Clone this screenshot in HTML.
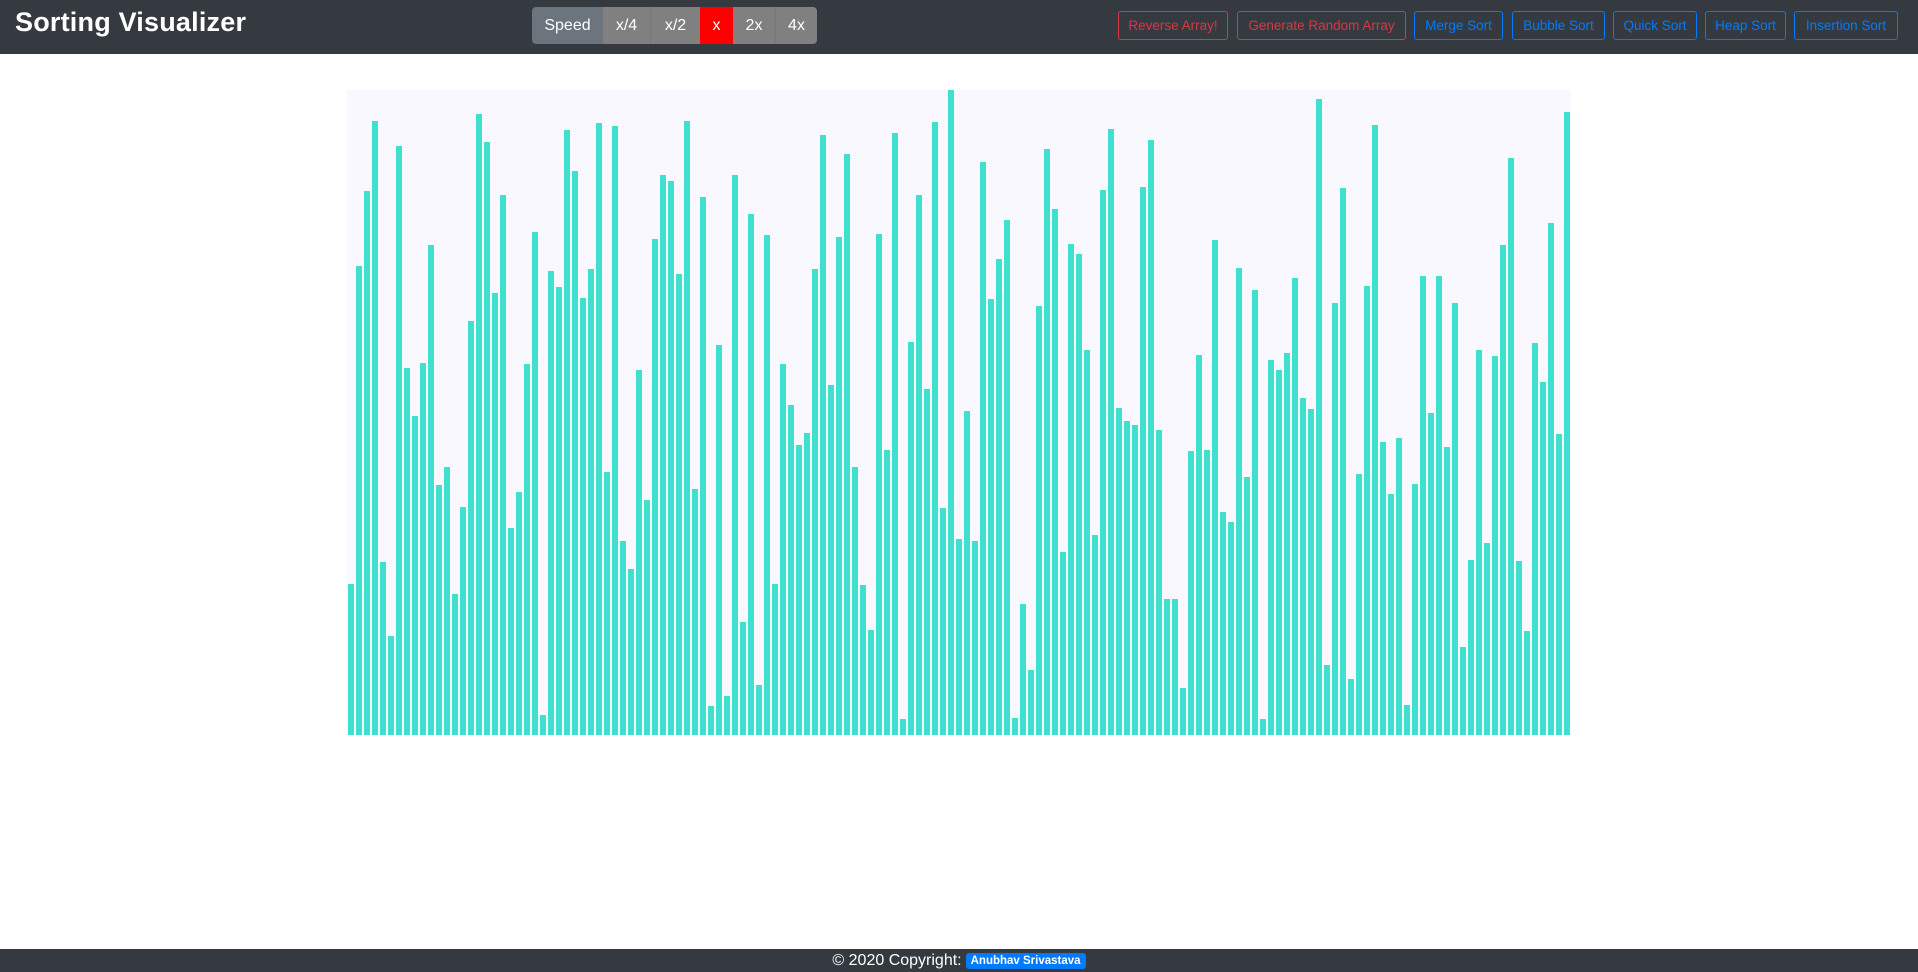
<!DOCTYPE html>
<html><head><meta charset="utf-8">
<style>
*{box-sizing:border-box;margin:0;padding:0}
body{width:1918px;height:972px;background:#fff;font-family:"Liberation Sans",sans-serif;position:relative;overflow:hidden}
.hdr{position:absolute;left:0;top:0;width:1918px;height:54px;background:#343a40}
.title{position:absolute;left:15px;top:7px;color:#fff;font-size:27px;font-weight:bold;letter-spacing:0.2px}
.seg{position:absolute;top:7px;height:37px;color:#fff;font-size:16px;display:flex;align-items:center;justify-content:center;background:#808080}
.btn{position:absolute;top:11px;height:29px;border:1px solid;border-radius:3px;font-size:13.5px;display:flex;align-items:center;justify-content:center;white-space:nowrap}
.r{color:#dc3545;border-color:#dc3545}
.b{color:#007bff;border-color:#007bff}
.chart{position:absolute;left:347px;top:90px;width:1224px;height:645px;background:#f8f8fe}
.bar{position:absolute;bottom:0;width:6px;background:#40e0d0}
.ftr{position:absolute;left:0;top:949px;width:1918px;height:23px;background:#343a40;color:#fff;font-size:16px;display:flex;align-items:center;justify-content:center;padding-top:1px}
.badge{background:#007bff;color:#fff;font-size:11.5px;font-weight:bold;padding:2px 5px;border-radius:3px;margin-left:4px}
</style></head><body>
<div class="hdr">
<div class="title">Sorting Visualizer</div>
<div class="seg" style="left:532px;width:71px;background:#6c757d;border-radius:4px 0 0 4px">Speed</div>
<div class="seg" style="left:603px;width:48px;border-right:1px solid #777">x/4</div>
<div class="seg" style="left:651px;width:49px">x/2</div>
<div class="seg" style="left:700px;width:33px;background:#ff0000">x</div>
<div class="seg" style="left:733px;width:43px;border-right:1px solid #777">2x</div>
<div class="seg" style="left:776px;width:41px;border-radius:0 4px 4px 0">4x</div>
<div class="btn r" style="left:1118px;width:110px">Reverse Array!</div>
<div class="btn r" style="left:1237px;width:169px">Generate Random Array</div>
<div class="btn b" style="left:1414px;width:89px">Merge Sort</div>
<div class="btn b" style="left:1512px;width:93px">Bubble Sort</div>
<div class="btn b" style="left:1613px;width:84px">Quick Sort</div>
<div class="btn b" style="left:1705px;width:81px">Heap Sort</div>
<div class="btn b" style="left:1794px;width:104px">Insertion Sort</div>
</div>
<div class="chart" id="c"></div>
<div class="ftr">© 2020 Copyright: <span class="badge">Anubhav Srivastava</span></div>
<script>
var t=[1195,433,254,86,1142,1319,146,677,792,666,383,958,914,1218,1010,565,69,136,498,263,1060,974,668,352,1508,445,484,108,206,510,440,91,926,98,1092,1159,682,993,369,
215,230,452,86,967,268,1487,622,1463,215,1286,309,1436,359,1195,668,766,862,833,440,120,718,364,165,914,1197,1305,357,874,115,1518,615,263,728,89,1013,12,1087,
780,1092,184,512,417,323,1515,1242,1400,529,153,297,1118,381,405,634,1077,251,105,773,804,814,244,132,826,1230,1230,1444,876,646,874,371,1022,1046,438,938,491,1518,
658,682,642,462,749,776,34,1388,522,247,1422,931,481,96,855,979,845,1484,955,457,785,457,867,522,1345,1137,634,1096,649,383,175,1139,1307,618,711,330,835,65];
var c=document.getElementById('c'),h='';
for(var i=0;i<t.length;i++){var hh=Math.round((1556-t[i])/1544*645);h+='<div class="bar" style="left:'+(1+i*8)+'px;height:'+hh+'px"></div>';}
c.innerHTML=h;
</script>
</body></html>
